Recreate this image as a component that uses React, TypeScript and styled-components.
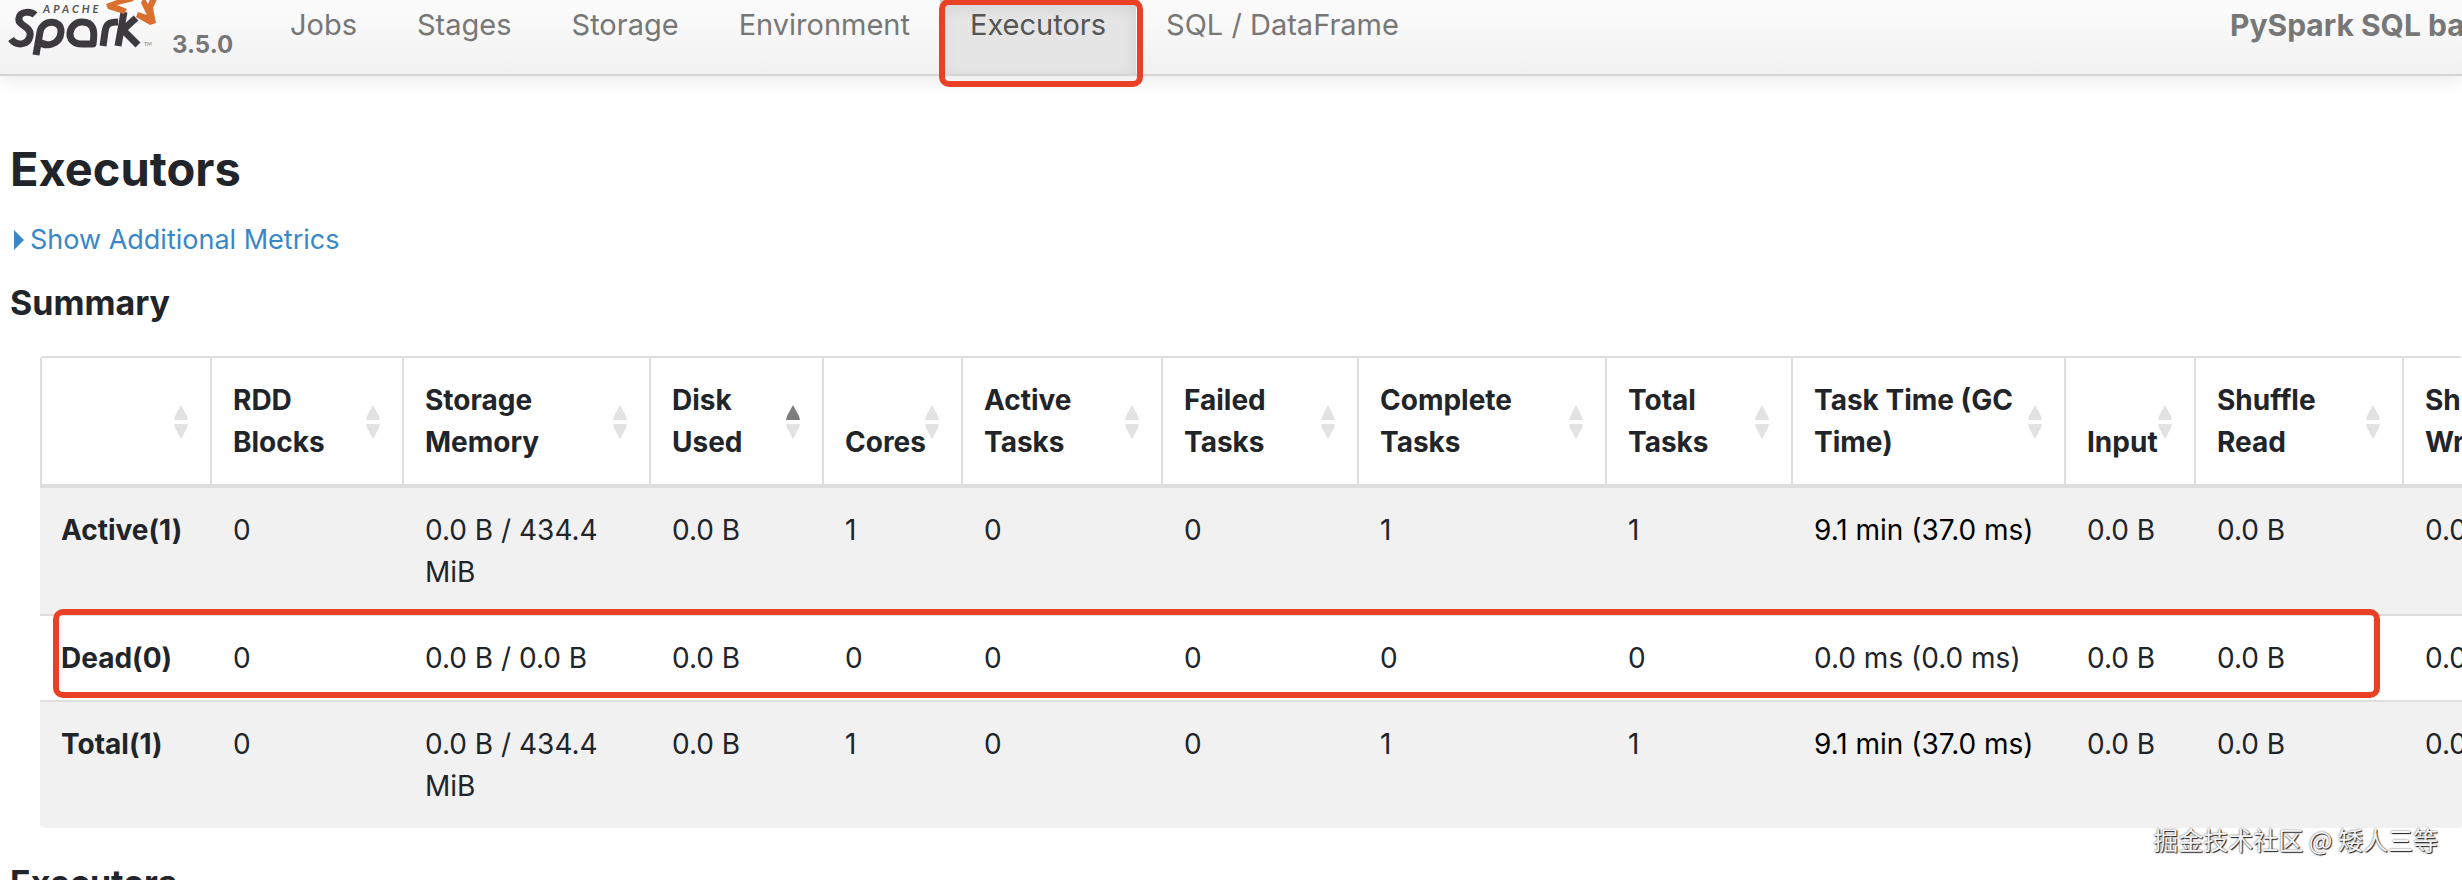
import React from 'react';
import styled, { createGlobalStyle } from 'styled-components';

const GlobalStyle = createGlobalStyle`
  *, *::before, *::after { box-sizing: border-box; }
  html, body { margin: 0; background: #fff; overflow: hidden; height: 100%; }
  body {
    font-family: Inter, "Liberation Sans", sans-serif;
    font-size: 28px;
    line-height: 42px;
    color: #212529;
  }
`;

const Page = styled.div`
  position: relative;
  height: 100vh;
  overflow: hidden;
`;

const Navbar = styled.header`
  display: flex;
  align-items: flex-start;
  height: 76px;
  padding-left: 8px;
  border-bottom: 2px solid #d4d4d4;
  background: linear-gradient(to bottom, #fcfcfc, #f1f1f1);
  box-shadow: 0 2px 20px rgba(0, 0, 0, 0.1);
  font-size: 29px;
`;

const Brand = styled.a`
  display: flex;
  flex: none;
  width: 252px;
  text-decoration: none;
`;

const Logo = styled.svg`
  display: block;
  width: 164px;
  height: 60px;
`;

const Version = styled.span`
  padding-top: 24px;
  font-size: 24px;
  font-weight: 700;
  color: #777;
`;

const Tabs = styled.nav`
  display: flex;
  height: 74px;
`;

const Tab = styled.a<{ $active?: boolean }>`
  position: relative;
  padding: 4px 30px 0;
  white-space: nowrap;
  text-decoration: none;
  color: ${(p) => (p.$active ? '#555' : '#777')};
  background: ${(p) => (p.$active ? '#e5e5e5' : 'transparent')};
  box-shadow: ${(p) => (p.$active ? 'inset 0 6px 16px rgba(0, 0, 0, 0.1)' : 'none')};
`;

const AppName = styled.strong`
  flex: none;
  margin-left: auto;
  width: 232px;
  padding-top: 4px;
  overflow: hidden;
  white-space: nowrap;
  font-size: 30px;
  color: #777;
`;

const Mark = styled.span`
  position: absolute;
  border: 6px solid #ea4025;
  border-radius: 10px;
  pointer-events: none;
`;

const TabMark = styled(Mark)`
  inset: -1px -7px -13px -1px;
`;

const RowMark = styled(Mark)`
  top: -5px;
  left: 13px;
  width: 2327px;
  height: 89px;
`;

const Content = styled.main`
  padding: 64px 0 0 10px;
`;

const Title = styled.h3`
  margin: 0 0 21px;
  font-size: 47px;
  line-height: 58px;
  font-weight: 700;
`;

const Toggle = styled.a`
  display: flex;
  align-items: center;
  gap: 6px;
  padding-left: 4px;
  font-size: 27px;
  color: #3a87c8;
  text-decoration: none;
`;

const Caret = styled.svg`
  width: 10px;
  height: 20px;
`;

const Section = styled.h4`
  margin: 21px 0 0;
  font-size: 34px;
  line-height: 42px;
  font-weight: 700;
`;

const TableWrap = styled.div`
  margin: 32px 0 34px 30px;
  overflow: hidden;
  border-radius: 4px;
`;

const Table = styled.table`
  width: 2560px;
  table-layout: fixed;
  border-collapse: separate;
  border-spacing: 0;
`;

const Head = styled.th`
  position: relative;
  padding: 21px;
  border: solid #dedede;
  border-width: 2px 0 4px 2px;
  text-align: left;
  vertical-align: bottom;
  font-weight: 700;
  white-space: nowrap;
`;

const Sorter = styled.svg`
  position: absolute;
  top: 47px;
  right: 22px;
  width: 14px;
  height: 34px;
`;

const Body = styled.tbody`
  tr + tr > * { border-top: 2px solid #dedede; }
`;

const Row = styled.tr<{ $striped?: boolean }>`
  position: relative;
  background: ${(p) => (p.$striped ? '#f1f1f1' : '#fff')};
`;

const Cell = styled.td<{ $dark?: boolean }>`
  padding: 21px 20px 21px 23px;
  vertical-align: top;
  color: ${(p) => (p.$dark ? '#000' : 'inherit')};
`;

const RowHead = styled.th`
  padding: 21px 0 21px 21px;
  text-align: left;
  vertical-align: top;
  font-weight: 700;
  white-space: nowrap;
`;

const Watermark = styled.div`
  position: absolute;
  right: 24px;
  bottom: 20px;
  font-family: "Noto Sans CJK SC", sans-serif;
  font-size: 25px;
  line-height: 42px;
  color: #f4f4f4;
  text-shadow: 1px 1px 1px #222, 0 0 2px #555;
`;

const columns: { lines: string[]; width: number; sorted?: boolean }[] = [
  { lines: [], width: 170 },
  { lines: ['RDD', 'Blocks'], width: 192 },
  { lines: ['Storage', 'Memory'], width: 247 },
  { lines: ['Disk', 'Used'], width: 173, sorted: true },
  { lines: ['Cores'], width: 139 },
  { lines: ['Active', 'Tasks'], width: 200 },
  { lines: ['Failed', 'Tasks'], width: 196 },
  { lines: ['Complete', 'Tasks'], width: 248 },
  { lines: ['Total', 'Tasks'], width: 186 },
  { lines: ['Task Time (GC', 'Time)'], width: 273 },
  { lines: ['Input'], width: 130 },
  { lines: ['Shuffle', 'Read'], width: 208 },
  { lines: ['Shuffle', 'Write'], width: 198 },
];

const rows = [
  { name: 'Active(1)', striped: true, dark: true, cells: ['0', '0.0 B / 434.4 MiB', '0.0 B', '1', '0', '0', '1', '1', '9.1 min (37.0 ms)', '0.0 B', '0.0 B', '0.0 B'] },
  { name: 'Dead(0)', marked: true, cells: ['0', '0.0 B / 0.0 B', '0.0 B', '0', '0', '0', '0', '0', '0.0 ms (0.0 ms)', '0.0 B', '0.0 B', '0.0 B'] },
  { name: 'Total(1)', striped: true, dark: true, cells: ['0', '0.0 B / 434.4 MiB', '0.0 B', '1', '0', '0', '1', '1', '9.1 min (37.0 ms)', '0.0 B', '0.0 B', '0.0 B'] },
];

const tabs = ['Jobs', 'Stages', 'Storage', 'Environment', 'Executors', 'SQL / DataFrame'];
const TIME_COLUMN = 8;

function SparkLogo() {
  return (
    <Logo viewBox="8 0 164 60" role="img" aria-label="Apache Spark">
      <text x="43" y="13" fontFamily="Lato" fontSize="11" fontWeight="700" fontStyle="italic" letterSpacing="3" fill="#555">APACHE</text>
      <g fill="none" stroke="#3c3a3e" strokeWidth="7" strokeLinejoin="round">
        <path d="M35 15C31 11 20 11 19 18C17 26 32 26 30 36C28 46 16 46 11 39" />
        <path d="M36 55L40 32C42 19 62 19 61 32C60 45 46 48 38 41" />
        <path d="M93 44H82C64 44 68 22 82 22C94 22 95 31 93 44Z" />
        <path d="M103 46L105 32C106 24 109 22 118 22" />
        <path d="M124 12L118 46M136 18L123 30L138 45" />
      </g>
      <path d="M128 -4L106 4L108 9L124 14L127 9L117 5L134 1Z" fill="#d9702f" />
      <path d="M144 -3L141 3L147 15L138 12L136 17L150 25L156 23L153 8L158 -3L151 -3L148 4Z" fill="#d9702f" />
      <text x="144" y="46" fontFamily="Lato" fontSize="5" fill="#777">TM</text>
    </Logo>
  );
}

export default function App() {
  return (
    <Page>
      <GlobalStyle />
      <Navbar>
        <Brand href="#">
          <SparkLogo />
          <Version>3.5.0</Version>
        </Brand>
        <Tabs>
          {tabs.map((tab) => (
            <Tab key={tab} href="#" $active={tab === 'Executors'}>
              {tab}
              {tab === 'Executors' && <TabMark />}
            </Tab>
          ))}
        </Tabs>
        <AppName>PySpark SQL basic example</AppName>
      </Navbar>
      <Content>
        <Title>Executors</Title>
        <Toggle href="#">
          <Caret viewBox="0 0 10 20"><path d="M0 0L10 10L0 20Z" fill="currentColor" /></Caret>
          Show Additional Metrics
        </Toggle>
        <Section>Summary</Section>
        <TableWrap>
          <Table>
            <colgroup>
              {columns.map((c, i) => <col key={i} width={c.width} />)}
            </colgroup>
            <thead>
              <tr>
                {columns.map((c, i) => (
                  <Head key={i} scope="col">
                    {c.lines.map((line, n) => (
                      <React.Fragment key={line}>{n > 0 && <br />}{line}</React.Fragment>
                    ))}
                    <Sorter viewBox="0 0 14 34">
                      <path d="M7 0L13 11Q14 15 14 15H0Q0 15 1 11Z" fill={c.sorted ? '#7d7d7d' : '#e2e2e2'} />
                      <path d="M7 34L13 23Q14 19 14 19H0Q0 19 1 23Z" fill="#e2e2e2" />
                    </Sorter>
                  </Head>
                ))}
              </tr>
            </thead>
            <Body>
              {rows.map((r) => (
                <Row key={r.name} $striped={r.striped}>
                  <RowHead scope="row">{r.name}{r.marked && <RowMark />}</RowHead>
                  {r.cells.map((text, i) => (
                    <Cell key={i} $dark={r.dark && i === TIME_COLUMN}>{text}</Cell>
                  ))}
                </Row>
              ))}
            </Body>
          </Table>
        </TableWrap>
        <Section>Executors</Section>
      </Content>
      <Watermark>掘金技术社区 @ 矮人三等</Watermark>
    </Page>
  );
}
